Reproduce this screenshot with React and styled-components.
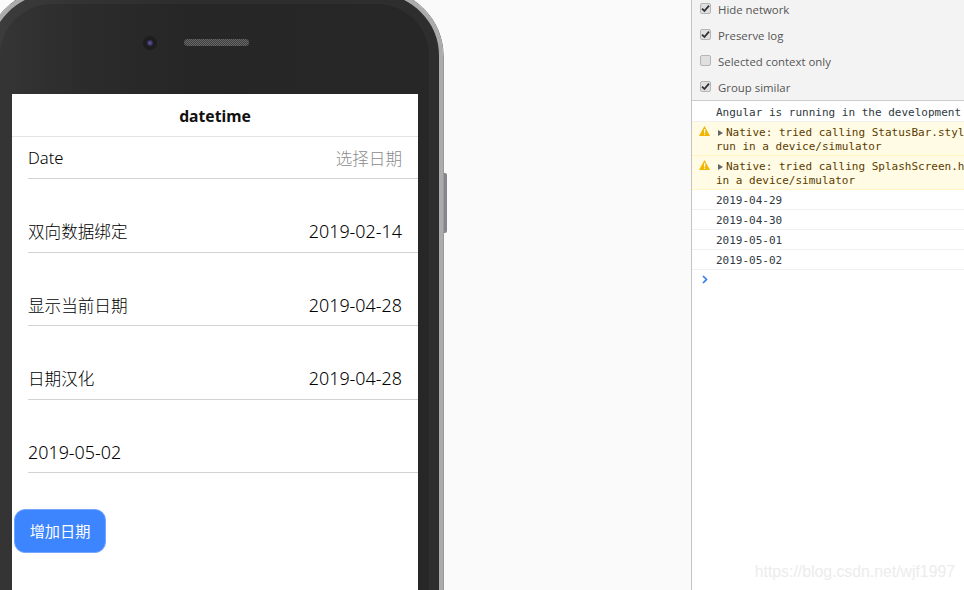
import React from "react";
import styled, { createGlobalStyle } from "styled-components";

const GlobalStyle = createGlobalStyle`
  html, body {
    margin: 0;
    padding: 0;
    height: 100%;
    overflow: hidden;
    background: #fafafa;
  }
  #root {
    height: 100%;
  }
`;

const Page = styled.div`
  position: relative;
  display: flex;
  width: 964px;
  height: 590px;
  overflow: hidden;
`;

const Stage = styled.div`
  width: 691px;
  flex-shrink: 0;
  background: #fafafa;
`;

const Phone = styled.div`
  position: relative;
  box-sizing: border-box;
  width: 457px;
  height: 720px;
  margin: -10px 0 0 -14px;
  border: 4px solid #ababab;
  border-radius: 66px;
  background: linear-gradient(90deg, #363636 0%, #2b2b2b 22%, #262626 45%, #272727 100%);
  box-shadow: inset 0 0 0 10px rgba(255, 255, 255, 0.035), 0 0 0 0.6px #5a5a5a;
`;

const SideButton = styled.div`
  position: absolute;
  right: -8px;
  top: 179px;
  width: 3px;
  height: 60px;
  background: #85858a;
  border-radius: 0 2px 2px 0;
`;

const Bezel = styled.div`
  display: flex;
  align-items: center;
  box-sizing: border-box;
  height: 100px;
  padding: 0 0 3px 157px;
  gap: 31px;
`;

const Camera = styled.div`
  width: 6px;
  height: 6px;
  border-radius: 50%;
  background: radial-gradient(circle, #6a5f96 0%, #3a3163 55%, #1a1a26 100%);
  box-shadow: 0 0 0 4px #1d1d20;
`;

const Speaker = styled.div`
  width: 65px;
  height: 7px;
  border-radius: 4px;
  background: repeating-conic-gradient(#6a6a6a 0 25%, #3c3c3c 0 50%) 0 0 / 2px 2px;
`;

const Screen = styled.div`
  width: 406px;
  height: 600px;
  margin-left: 22px;
  background: #fff;
  font-family: "Noto Sans", "Noto Sans CJK SC", sans-serif;
  color: #222;
`;

const Title = styled.div`
  height: 42px;
  line-height: 44px;
  border-bottom: 1px solid #e4e4e4;
  text-align: center;
  font-size: 15.7px;
  font-weight: 700;
  color: #111;
`;

const List = styled.div`
  display: flex;
  flex-direction: column;
  gap: 31.5px;
`;

const Item = styled.div`
  display: flex;
  align-items: center;
  justify-content: space-between;
  box-sizing: border-box;
  height: 42px;
  margin-left: 16px;
  padding-right: 16px;
  border-bottom: 1.5px solid #d2d2d6;
  font-size: 16.6px;
  font-weight: 300;
  color: #000;
`;

const Placeholder = styled.span`
  color: #8c8c8c;
`;

const DateText = styled.span`
  font-size: 17.9px;
  font-weight: 300;
  color: #000;
`;

const AddButton = styled.button`
  display: block;
  box-sizing: border-box;
  width: 92px;
  height: 44px;
  margin: 35.5px 0 0 2px;
  padding: 0 0 2px;
  border: 1px solid #74a5ff;
  border-radius: 11px;
  background: #3d84ff;
  color: #fff;
  font-family: "Noto Sans CJK SC", sans-serif;
  font-size: 15.2px;
  font-weight: 400;
`;

const Devtools = styled.div`
  flex: 1;
  min-width: 0;
  border-left: 1px solid #c4c4c4;
  background: #fff;
  overflow: hidden;
`;

const Options = styled.div`
  margin-top: -4px;
  background: #f3f3f3;
  border-bottom: 1px solid #ccc;
`;

const Option = styled.div`
  display: flex;
  align-items: center;
  height: 26px;
  padding-left: 8px;
  gap: 7px;
  font-family: "Open Sans", sans-serif;
  font-size: 11.4px;
  color: #555;
`;

const Check = styled.span`
  display: flex;
  align-items: center;
  justify-content: center;
  box-sizing: border-box;
  width: 11px;
  height: 11px;
  margin-top: -2px;
  border: 1px solid #b5b5b5;
  border-radius: 2px;
  background: #e0e0e0;
`;

const Message = styled.div`
  display: flex;
  font-family: "DejaVu Sans Mono", monospace;
  font-size: 11px;
  line-height: 14px;
  white-space: nowrap;
  padding: ${(p) => (p.$first ? "5px 0 1px" : "4px 0 1px")};
  background: ${(p) => (p.$warn ? "#fffbe5" : "#fff")};
  color: ${(p) => (p.$warn ? "#5c3b00" : "#303942")};
  border-bottom: 1px solid ${(p) => (p.$warn ? "#fff5c2" : "#f0f0f0")};
`;

const Gutter = styled.div`
  flex: 0 0 24px;
  padding: 0 0 0 7px;
  box-sizing: border-box;
`;

const Lines = styled.div`
  min-width: 0;
`;

const Arrow = styled.span`
  display: inline-block;
  width: 0;
  height: 0;
  margin: 0 3px 0 2px;
  border-left: 5px solid #666;
  border-top: 3.5px solid transparent;
  border-bottom: 3.5px solid transparent;
`;

const Prompt = styled.div`
  padding: 5px 0 0 10px;
  line-height: 0;
`;

const Watermark = styled.div`
  position: absolute;
  right: 9px;
  bottom: 9px;
  font-family: "Liberation Sans", sans-serif;
  font-size: 15.8px;
  color: #ececec;
`;

const CheckMark = () => (
  <svg width="9" height="9" viewBox="0 0 9 9">
    <path d="M1 4.6 L3.4 7 L8 1.6" fill="none" stroke="#333" strokeWidth="1.8" />
  </svg>
);

const WarnIcon = () => (
  <svg width="11" height="10" viewBox="0 0 11 10">
    <path d="M5.5 0 L11 10 H0 Z" fill="#f2b600" />
    <rect x="5" y="3" width="1.2" height="3.8" fill="#fff" />
    <rect x="5" y="7.6" width="1.2" height="1.2" fill="#fff" />
  </svg>
);

const options = [
  { label: "Hide network", on: true },
  { label: "Preserve log", on: true },
  { label: "Selected context only", on: false },
  { label: "Group similar", on: true },
];

const dates = ["2019-04-29", "2019-04-30", "2019-05-01", "2019-05-02"];

const App = () => {
  return (
    <Page>
      <GlobalStyle />
      <Stage>
        <Phone>
          <SideButton />
          <Bezel>
            <Camera />
            <Speaker />
          </Bezel>
          <Screen>
            <Title>datetime</Title>
            <List>
              <Item>
                <span>Date</span>
                <Placeholder>选择日期</Placeholder>
              </Item>
              <Item>
                <span>双向数据绑定</span>
                <DateText>2019-02-14</DateText>
              </Item>
              <Item>
                <span>显示当前日期</span>
                <DateText>2019-04-28</DateText>
              </Item>
              <Item>
                <span>日期汉化</span>
                <DateText>2019-04-28</DateText>
              </Item>
              <Item>
                <DateText>2019-05-02</DateText>
              </Item>
            </List>
            <AddButton>增加日期</AddButton>
          </Screen>
        </Phone>
      </Stage>
      <Devtools>
        <Options>
          {options.map((o) => (
            <Option key={o.label}>
              <Check>{o.on && <CheckMark />}</Check>
              {o.label}
            </Option>
          ))}
        </Options>
        <Message $first>
          <Gutter />
          <Lines>Angular is running in the development</Lines>
        </Message>
        <Message $warn>
          <Gutter>
            <WarnIcon />
          </Gutter>
          <Lines>
            <div>
              <Arrow />
              Native: tried calling StatusBar.styl
            </div>
            <div>run in a device/simulator</div>
          </Lines>
        </Message>
        <Message $warn>
          <Gutter>
            <WarnIcon />
          </Gutter>
          <Lines>
            <div>
              <Arrow />
              Native: tried calling SplashScreen.h
            </div>
            <div>in a device/simulator</div>
          </Lines>
        </Message>
        {dates.map((d) => (
          <Message key={d}>
            <Gutter />
            <Lines>{d}</Lines>
          </Message>
        ))}
        <Prompt>
          <svg width="6" height="9" viewBox="0 0 6 9">
            <path d="M1 1 L4.5 4.5 L1 8" fill="none" stroke="#367cf1" strokeWidth="1.7" />
          </svg>
        </Prompt>
      </Devtools>
      <Watermark>https://blog.csdn.net/wjf1997</Watermark>
    </Page>
  );
};

export default App;
